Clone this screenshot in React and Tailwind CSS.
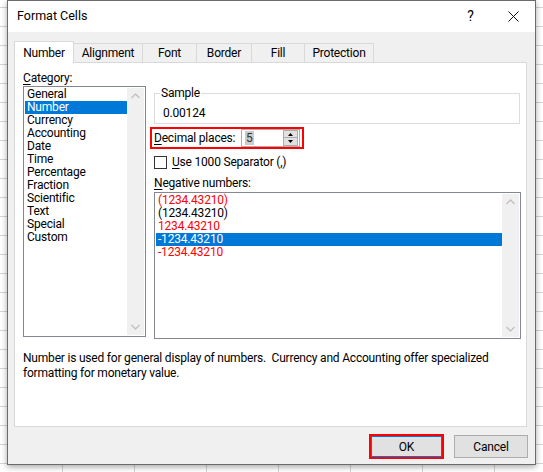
import React from 'react';

const categories = [
  'General', 'Number', 'Currency', 'Accounting', 'Date', 'Time',
  'Percentage', 'Fraction', 'Scientific', 'Text', 'Special', 'Custom',
];

const negatives = [
  { text: '(1234.43210)', red: true },
  { text: '(1234.43210)', red: false },
  { text: '1234.43210', red: true },
  { text: '-1234.43210', red: false },
  { text: '-1234.43210', red: true },
];

const tabs = [
  { label: 'Number', w: 'w-[60px]' },
  { label: 'Alignment', w: 'w-[70px]' },
  { label: 'Font', w: 'w-[55px]' },
  { label: 'Border', w: 'w-[56px]' },
  { label: 'Fill', w: 'w-[54px]' },
  { label: 'Protection', w: 'w-[70px]' },
];

const Chevron = ({ up }) => (
  <svg width="9" height="6" viewBox="0 0 9 6">
    <path
      d={up ? 'M0.5 5 L4.5 1 L8.5 5' : 'M0.5 1 L4.5 5 L8.5 1'}
      fill="none"
      stroke="#c2c2c2"
      strokeWidth="1.4"
    />
  </svg>
);

const Scrollbar = () => (
  <div className="w-[17px] h-full bg-[#f0f0f0] flex flex-col items-center justify-between py-[5px]">
    <Chevron up />
    <Chevron />
  </div>
);

const ListBox = ({ height, children }) => (
  <div className={`${height} w-full border border-[#828790] bg-white p-[1px] flex`}>
    <div className="flex-1 flex flex-col">{children}</div>
    <Scrollbar />
  </div>
);

const Row = ({ selected, red, children }) => (
  <div
    className={`h-[13px] leading-[13px] pl-[2px] whitespace-nowrap ${
      selected ? 'bg-[#0078d7] text-white' : red ? 'text-[#ff0000]' : 'text-black'
    }`}
  >
    {children}
  </div>
);

export default function App() {
  return (
    <div className="w-[543px] h-[472px] overflow-hidden bg-white bg-[linear-gradient(#d4d4d4_1px,transparent_1px),linear-gradient(90deg,#d4d4d4_1px,transparent_1px)] bg-[size:72px_19px] bg-[position:62px_7px] font-['Roboto',sans-serif] text-[12px] tracking-[-0.2px] text-black">
      <div className="ml-[7px] w-[529px] h-[465px] border border-[#6b6b6b] bg-[#f0f0f0] flex flex-col shadow-[0_2px_6px_rgba(0,0,0,0.35)]">
        {/* title bar */}
        <div className="h-[31px] bg-white flex items-center pl-[9px] shrink-0">
          <span className="text-[12.5px] tracking-normal">Format Cells</span>
          <div className="ml-auto flex">
            <div className="w-[43px] flex justify-center text-[14px]">?</div>
            <div className="w-[43px] flex justify-center items-center">
              <svg width="11" height="11" viewBox="0 0 11 11">
                <path d="M0.5 0.5 L10.5 10.5 M10.5 0.5 L0.5 10.5" stroke="#111" strokeWidth="1" />
              </svg>
            </div>
          </div>
        </div>

        {/* tabs */}
        <div className="flex items-end pl-[6px] pt-[8px] h-[30px] shrink-0">
          {tabs.map((t, i) =>
            i === 0 ? (
              <div
                key={t.label}
                className={`${t.w} h-[22px] bg-white border border-b-0 border-[#d9d9d9] flex items-center justify-center relative z-10 -mb-px`}
              >
                {t.label}
              </div>
            ) : (
              <div
                key={t.label}
                className={`${t.w} h-[19px] -ml-px border border-b-0 border-[#d9d9d9] bg-[#f0f0f0] flex items-center justify-center`}
              >
                {t.label}
              </div>
            )
          )}
        </div>

        {/* panel */}
        <div className="ml-[6px] w-[513px] h-[365px] bg-white border border-[#d9d9d9] pt-[7px] pl-[8px] shrink-0">
          <div className="flex items-start">
            {/* category */}
            <div className="w-[123px]">
              <div className="h-[16px] leading-[16px]">
                <span className="underline underline-offset-[2px]">C</span>ategory:
              </div>
              <ListBox height="h-[251px]">
                {categories.map((c, i) => (
                  <Row key={c} selected={i === 1}>
                    {c}
                  </Row>
                ))}
              </ListBox>
            </div>

            {/* options */}
            <div className="ml-[8px] w-[367px] mt-[15px]">
              <fieldset className="border border-[#dcdcdc] w-[366px] pt-[4px] pb-[2px]">
                <legend className="ml-[5px] px-[1px] leading-[16px]">Sample</legend>
                <div className="pl-[8px] leading-[16px]">0.00124</div>
              </fieldset>

              <div className="mt-[3px] -ml-[4px] w-[154px] h-[22px] border-2 border-[#ff0000] flex items-center pl-[2px]">
                <span className="w-[87px] leading-[16px] whitespace-nowrap">
                  <span className="underline underline-offset-[2px]">D</span>ecimal places:
                </span>
                <div className="w-[59px] h-[18px] border border-[#adadad] bg-white flex items-center">
                  <span className="ml-[3px] px-[1px] bg-[#cccccc] text-[#333] leading-[14px]">5</span>
                  <div className="ml-auto mr-px w-[15px] h-[16px] flex flex-col">
                    <div className="h-[8px] bg-[#e1e1e1] border border-[#adadad] flex items-center justify-center">
                      <svg width="5" height="3" viewBox="0 0 5 3">
                        <path d="M0 3 L2.5 0 L5 3 Z" fill="#000" />
                      </svg>
                    </div>
                    <div className="h-[8px] bg-[#e1e1e1] border border-t-0 border-[#adadad] flex items-center justify-center">
                      <svg width="5" height="3" viewBox="0 0 5 3">
                        <path d="M0 0 L2.5 3 L5 0 Z" fill="#000" />
                      </svg>
                    </div>
                  </div>
                </div>
              </div>

              <div className="mt-[5px] h-[16px] flex items-center">
                <div className="w-[13px] h-[13px] border border-[#333333] bg-white" />
                <span className="ml-[5px] leading-[16px]">
                  <span className="underline underline-offset-[2px]">U</span>se 1000 Separator (,)
                </span>
              </div>

              <div className="mt-[5px] h-[16px] leading-[16px]">
                <span className="underline underline-offset-[2px]">N</span>egative numbers:
              </div>
              <div className="mt-[1px]">
                <ListBox height="h-[147px]">
                  {negatives.map((n, i) => (
                    <Row key={i} selected={i === 3} red={n.red}>
                      {n.text}
                    </Row>
                  ))}
                </ListBox>
              </div>
            </div>
          </div>

          <p className="mt-[12px] leading-[15px] whitespace-nowrap">
            Number is used for general display of numbers.&nbsp; Currency and Accounting offer specialized
            <br />
            formatting for monetary value.
          </p>
        </div>

        {/* buttons */}
        <div className="flex justify-end items-center pr-[7px] mt-[7px]">
          <div className="w-[75px] h-[25px] border-2 border-[#ff0000]">
            <button className="w-full h-full border border-[#0078d7] bg-[#e1e1e1] text-black text-[12px]">
              OK
            </button>
          </div>
          <button className="ml-[10px] w-[74px] h-[23px] border border-[#adadad] bg-[#e1e1e1] text-black text-[12px]">
            Cancel
          </button>
        </div>
      </div>
    </div>
  );
}
